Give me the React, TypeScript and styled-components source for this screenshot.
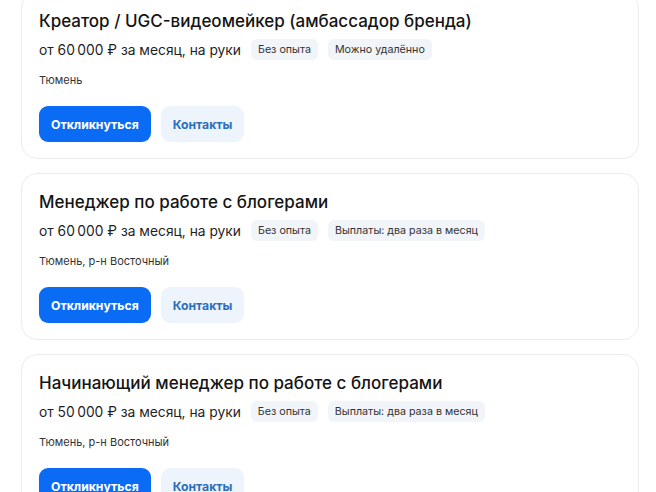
import React from "react";
import styled, { createGlobalStyle } from "styled-components";

const Global = createGlobalStyle`
  html, body { margin: 0; padding: 0; background: #ffffff; }
  body { font-family: Inter, "Noto Sans", Arial, sans-serif; color: #1a1a1a; overflow: hidden; height: 492px; }
`;

const List = styled.div`
  display: flex;
  flex-direction: column;
  gap: 14px;
  width: 618px;
  margin: -8px 0 0 21px;
`;

const Card = styled.div`
  box-sizing: border-box;
  height: 167px;
  border: 1px solid #ececec;
  border-radius: 16px;
  padding: 16px 17px 16px 17px;
  display: flex;
  flex-direction: column;
  background: #fff;
`;

const Title = styled.div`
  font-size: 17px;
  line-height: 24px;
  font-weight: 500;
  color: #141414;
`;

const SalaryRow = styled.div`
  display: flex;
  align-items: center;
  gap: 10px;
  margin-top: 6px;
  height: 21px;
`;

const Salary = styled.span`
  font-size: 13.8px;
  color: #1f1f1f;
`;

const Tag = styled.span`
  display: inline-flex;
  align-items: center;
  height: 21px;
  padding: 0 7px;
  border-radius: 6px;
  background: #f1f4f8;
  font-size: 10.7px;
  color: #333;
`;

const Location = styled.div`
  margin-top: 12px;
  font-size: 11px;
  line-height: 16px;
  color: #333;
`;

const Actions = styled.div`
  display: flex;
  gap: 10px;
  margin-top: 18px;
`;

const Button = styled.button<{ $primary?: boolean }>`
  height: 36px;
  border: none;
  border-radius: 9px;
  padding: 0 12px;
  font-family: inherit;
  font-size: 12.2px;
  font-weight: 700;
  background: ${(p) => (p.$primary ? "#0a6cf5" : "#eef4fc")};
  color: ${(p) => (p.$primary ? "#ffffff" : "#2c6fc0")};
  cursor: pointer;
`;

type Job = { title: string; salary: string; tags: string[]; location: string };

const jobs: Job[] = [
  {
    title: "Креатор / UGC-видеомейкер (амбассадор бренда)",
    salary: "от 60\u2009000 ₽ за месяц, на руки",
    tags: ["Без опыта", "Можно удалённо"],
    location: "Тюмень",
  },
  {
    title: "Менеджер по работе с блогерами",
    salary: "от 60\u2009000 ₽ за месяц, на руки",
    tags: ["Без опыта", "Выплаты: два раза в месяц"],
    location: "Тюмень, р-н Восточный",
  },
  {
    title: "Начинающий менеджер по работе с блогерами",
    salary: "от 50\u2009000 ₽ за месяц, на руки",
    tags: ["Без опыта", "Выплаты: два раза в месяц"],
    location: "Тюмень, р-н Восточный",
  },
];

export default function App() {
  return (
    <>
      <Global />
      <List>
        {jobs.map((j, i) => (
          <Card key={i}>
            <Title>{j.title}</Title>
            <SalaryRow>
              <Salary>{j.salary}</Salary>
              {j.tags.map((t) => (
                <Tag key={t}>{t}</Tag>
              ))}
            </SalaryRow>
            <Location>{j.location}</Location>
            <Actions>
              <Button $primary>Откликнуться</Button>
              <Button>Контакты</Button>
            </Actions>
          </Card>
        ))}
      </List>
    </>
  );
}
